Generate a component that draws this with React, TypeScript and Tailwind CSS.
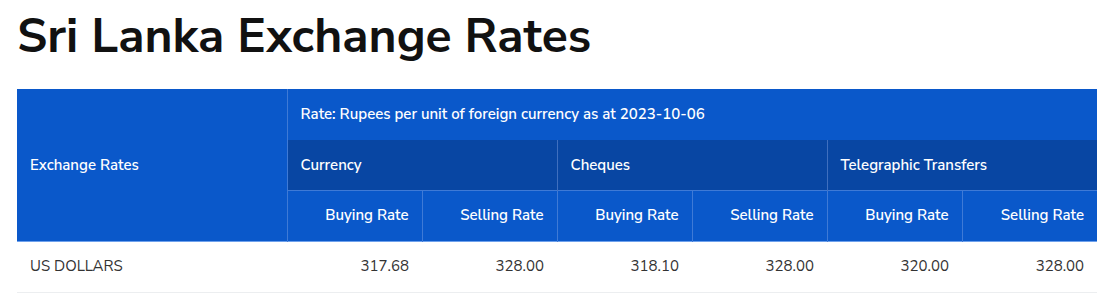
import React from 'react';

interface RateRow {
  name: string;
  values: string[];
}

const ROWS: RateRow[] = [
  { name: 'US DOLLARS', values: ['317.68', '328.00', '318.10', '328.00', '320.00', '328.00'] },
];

const GROUPS = ['Currency', 'Cheques', 'Telegraphic Transfers'];

const App: React.FC = () => {
  return (
    <div className="bg-white px-[17px] pt-[6px]" style={{ fontFamily: '"Nunito Sans", Lato, "Open Sans", sans-serif' }}>
      <h1 className="text-[48px] font-bold text-[#111] leading-[60px] mb-[23px]">Sri Lanka Exchange Rates</h1>

      <table className="w-[1080px] border-collapse table-fixed text-[15px]">
        <colgroup>
          <col className="w-[270px]" />
          {[0, 1, 2, 3, 4, 5].map(i => (
            <col key={i} className="w-[135px]" />
          ))}
        </colgroup>
        <thead className="text-white font-semibold">
          <tr className="h-[51px] bg-[#0a58ca]">
            <th rowSpan={3} className="text-left font-semibold px-[13px] border-r border-[#3f7ad6]">Exchange Rates</th>
            <th colSpan={6} className="text-left font-semibold px-[13px]">Rate: Rupees per unit of foreign currency as at 2023-10-06</th>
          </tr>
          <tr className="h-[50px] bg-[#0846a3]">
            {GROUPS.map((g, i) => (
              <th key={g} colSpan={2} className={`text-left font-semibold px-[13px] ${i < 2 ? 'border-r border-[#3f6fbf]' : ''}`}>{g}</th>
            ))}
          </tr>
          <tr className="h-[51px] bg-[#0a58ca] border-b border-[#6ea1ec]">
            {[0, 1, 2, 3, 4, 5].map(i => (
              <th key={i} className={`text-right font-semibold px-[13px] border-t border-[#3f7ad6] ${i < 5 ? 'border-r border-[#3f7ad6]' : ''}`}>
                {i % 2 === 0 ? 'Buying Rate' : 'Selling Rate'}
              </th>
            ))}
          </tr>
        </thead>
        <tbody className="text-[#333]">
          {ROWS.map(row => (
            <tr key={row.name} className="h-[51px] border-b border-[#eceef0]">
              <td className="px-[13px] text-left">{row.name}</td>
              {row.values.map((v, i) => (
                <td key={i} className="px-[13px] text-right">{v}</td>
              ))}
            </tr>
          ))}
        </tbody>
      </table>
    </div>
  );
};

export default App;
